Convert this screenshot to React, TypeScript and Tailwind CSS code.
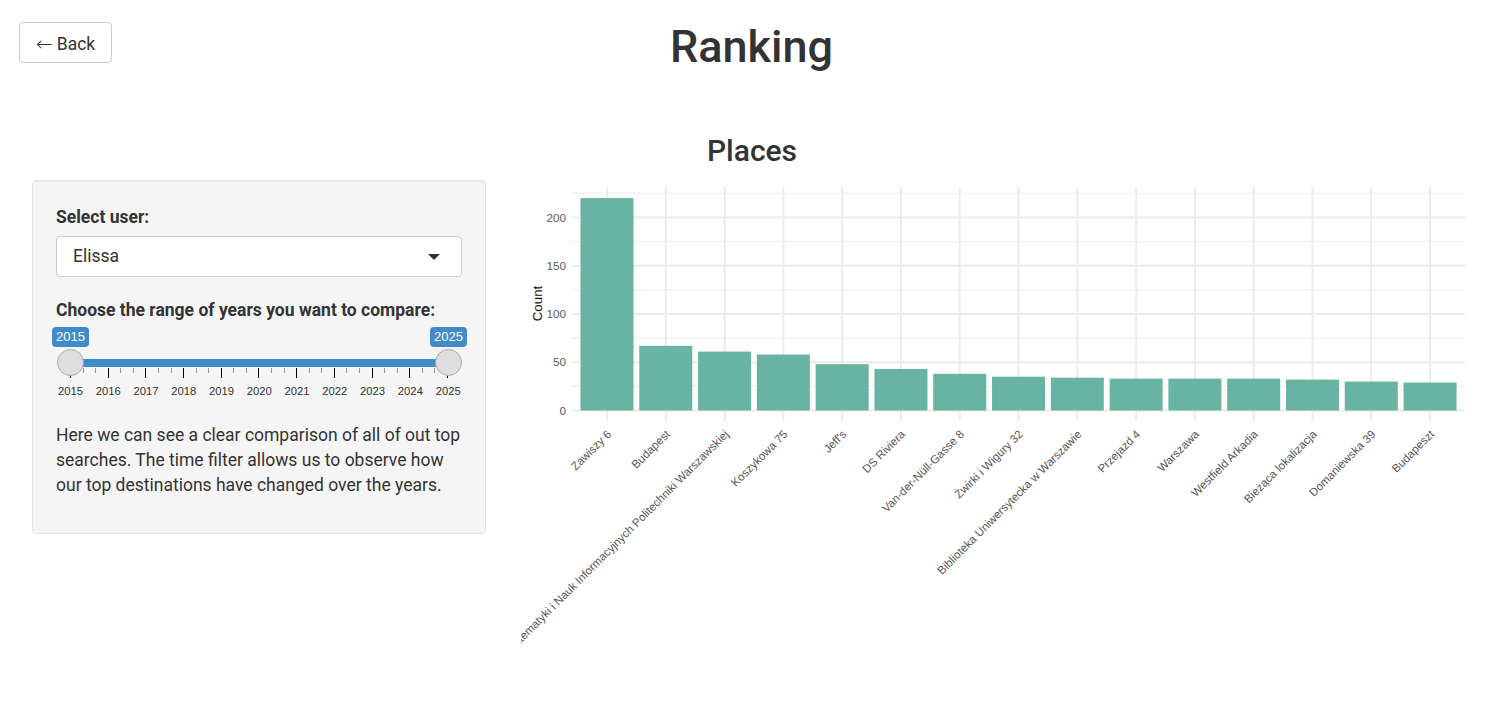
import React from 'react';

const PLACES: { name: string; count: number }[] = [
  { name: 'Zawiszy 6', count: 220 },
  { name: 'Budapest', count: 67 },
  { name: 'Wydział Matematyki i Nauk Informacyjnych Politechniki Warszawskiej', count: 61 },
  { name: 'Koszykowa 75', count: 58 },
  { name: "Jeff's", count: 48 },
  { name: 'DS Riviera', count: 43 },
  { name: 'Van-der-Nüll-Gasse 8', count: 38 },
  { name: 'Żwirki i Wigury 32', count: 35 },
  { name: 'Biblioteka Uniwersytecka w Warszawie', count: 34 },
  { name: 'Przejazd 4', count: 33 },
  { name: 'Warszawa', count: 33 },
  { name: 'Westfield Arkadia', count: 33 },
  { name: 'Bieżąca lokalizacja', count: 32 },
  { name: 'Domaniewska 39', count: 30 },
  { name: 'Budapeszt', count: 29 },
];

const YEARS = Array.from({ length: 11 }, (_, i) => 2015 + i);
const TICKS = Array.from({ length: 31 }, (_, i) => i);

// chart geometry, page coordinates (svg viewBox starts at 521,180)
const X0 = 607;
const PITCH = 58.79;
const BAR_W = 53;
const Y_ZERO = 410.5;
const Y_UNIT = 0.9655;
const yOf = (v: number) => Y_ZERO - v * Y_UNIT;

const YearSlider: React.FC = () => {
  return (
    <div className="relative h-[99.5px] pt-[4px] font-['Liberation_Sans',Arial,sans-serif]">
      <div className="-ml-[4px] -mr-[5px] flex justify-between">
        <span className="h-[20px] w-[37px] rounded-[4px] bg-[#428bca] text-center text-[13px] leading-[20px] text-white">2015</span>
        <span className="h-[20px] w-[37px] rounded-[4px] bg-[#428bca] text-center text-[13px] leading-[20px] text-white">2025</span>
      </div>

      <div className="mx-[14.5px] mt-[12px] h-[8px] bg-[#428bca]" />

      <div className="mx-[14px] mt-[1px] flex items-start justify-between">
        {TICKS.map((i) => (
          <span key={i} className={i % 3 === 0 ? 'h-[10px] w-px bg-black' : 'h-[5px] w-px bg-[#999]'} />
        ))}
      </div>

      <div className="-ml-[4.4px] mt-[6px] flex">
        {YEARS.map((y) => (
          <span key={y} className="w-[37.78px] shrink-0 text-center text-[11.25px] leading-[14px] text-[#333]">
            {y}
          </span>
        ))}
      </div>

      {/* handles sit over the track */}
      <span className="absolute left-[1px] top-[26px] h-[27px] w-[27px] rounded-full border border-[#aaa] bg-[#dedede]" />
      <span className="absolute right-[0px] top-[26px] h-[27px] w-[27px] rounded-full border border-[#aaa] bg-[#dedede]" />
    </div>
  );
};

const PlacesChart: React.FC = () => {
  const major = [0, 50, 100, 150, 200];
  const minor = [25, 75, 125, 175, 225];
  return (
    <svg
      width={965}
      height={500}
      viewBox="521 180 965 500"
      className="block shrink-0"
      fontFamily="'Liberation Sans', Arial, sans-serif"
    >
      {minor.map((v) => (
        <line key={'mi' + v} x1={572} x2={1465} y1={yOf(v)} y2={yOf(v)} stroke="#ebebeb" strokeWidth={0.95} />
      ))}
      {major.map((v) => (
        <line key={'ma' + v} x1={572} x2={1465} y1={yOf(v)} y2={yOf(v)} stroke="#ebebeb" strokeWidth={1.9} />
      ))}
      {PLACES.map((p, i) => {
        const cx = X0 + i * PITCH;
        return <line key={'v' + i} x1={cx} x2={cx} y1={187} y2={421} stroke="#ebebeb" strokeWidth={1.9} />;
      })}

      {PLACES.map((p, i) => {
        const cx = X0 + i * PITCH;
        const top = yOf(p.count);
        return <rect key={'b' + i} x={cx - BAR_W / 2} y={top} width={BAR_W} height={Y_ZERO - top} fill="#69b3a2" />;
      })}

      {major.map((v) => (
        <text key={'yt' + v} x={566} y={yOf(v)} dy="0.36em" textAnchor="end" fontSize={11.7} fill="#5a5a5a">
          {v}
        </text>
      ))}

      <text x={537} y={303.5} transform="rotate(-90 537 303.5)" dy="0.36em" textAnchor="middle" fontSize={13.3} fill="#111">
        Count
      </text>

      {PLACES.map((p, i) => {
        const cx = X0 + i * PITCH + 2;
        return (
          <text
            key={'xt' + i}
            transform={`translate(${cx} 432) rotate(-45)`}
            dy="0.36em"
            textAnchor="end"
            fontSize={11.5}
            fill="#555"
          >
            {p.name}
          </text>
        );
      })}
    </svg>
  );
};

const App: React.FC = () => {
  return (
    <div className="min-h-screen bg-white font-['Roboto',sans-serif] text-[#333]">
      <div className="grid grid-cols-[1fr_auto_1fr] items-start pt-[20px]">
        <div>
          <button className="ml-[19px] mt-[2px] flex h-[41px] items-center gap-[4px] rounded-[4px] border border-[#ccc] bg-white px-[16px] pt-[3px] text-[17.5px] leading-[25px] text-[#333]">
            <span className="font-['DejaVu_Sans',sans-serif] text-[20px] font-light leading-[25px]">←</span>
            <span>Back</span>
          </button>
        </div>
        <h1 className="ml-[2px] text-[45px] font-medium leading-[54px]">Ranking</h1>
        <div />
      </div>

      <h3 className="mt-[59px] pl-[3px] text-center text-[30px] font-medium leading-[36px]">Places</h3>

      <div className="mt-[11px] flex items-start gap-[35px] pl-[32px]">
        <div className="w-[454px] shrink-0 rounded-[4px] border border-[#e3e3e3] bg-[#f5f5f5] px-[23px] pb-[23px] pt-[24px] shadow-[inset_0_1px_1px_rgba(0,0,0,0.05)]">
          <label className="mb-[6px] block text-[17.5px] font-bold leading-[25px]">Select user:</label>
          <div className="flex h-[41px] w-full items-center justify-between rounded-[4px] border border-[#ccc] bg-white pl-[16px] pr-[21px]">
            <span className="text-[17.5px] leading-[25px] text-[#333]">Elissa</span>
            <span className="h-0 w-0 border-x-[6px] border-t-[6px] border-x-transparent border-t-[#333]" />
          </div>

          <label className="mt-[21px] block text-[17.5px] font-bold leading-[25px]">
            Choose the range of years you want to compare:
          </label>
          <YearSlider />

          <p className="mb-[12px] text-[17.5px] leading-[25px]">
            Here we can see a clear comparison of all of out top searches. The time filter allows us to observe how our
            top destinations have changed over the years.
          </p>
        </div>

        <PlacesChart />
      </div>
    </div>
  );
};

export default App;
